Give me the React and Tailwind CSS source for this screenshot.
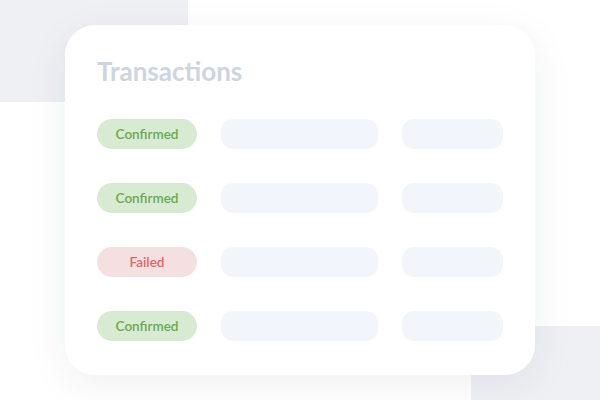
import React from 'react';

const rows = [
    { status: 'Confirmed', ok: true },
    { status: 'Confirmed', ok: true },
    { status: 'Failed', ok: false },
    { status: 'Confirmed', ok: true },
];

const Pill = ({ status, ok }) => (
    <div className={`w-[100px] h-[30px] rounded-full flex items-center justify-center text-[13.5px] font-semibold ${ok ? 'bg-[#d9ead3] text-[#6aa84f]' : 'bg-[#f4e0e0] text-[#e06666]'}`}>
        {status}
    </div>
);

export default function App() {
    return (
        <div className="relative w-[600px] h-[400px] overflow-hidden bg-white" style={{ fontFamily: 'Lato, "Open Sans", sans-serif' }}>
            {/* backdrop blocks */}
            <div className="absolute left-0 top-0 w-[188px] h-[102px] bg-[#eef0f4]" />
            <div className="absolute left-[471px] top-[326px] w-[129px] h-[74px] bg-[#eef0f4]" />

            <div className="absolute left-[65px] top-[25px] w-[470px] h-[350px] rounded-[30px] bg-white shadow-[0_10px_40px_rgba(30,41,59,0.07)] pl-[32px] pt-[30px]">
                <h2 className="text-[26px] leading-[32px] font-bold text-[#cdd5df]">Transactions</h2>
                <div className="mt-[32px] flex flex-col gap-[34px]">
                    {rows.map((row, i) => (
                        <div key={i} className="flex items-center">
                            <Pill {...row} />
                            <div className="ml-[24px] w-[157px] h-[30px] rounded-[12px] bg-[#f2f5f9]" />
                            <div className="ml-[24px] w-[101px] h-[30px] rounded-[12px] bg-[#f2f5f9]" />
                        </div>
                    ))}
                </div>
            </div>
        </div>
    );
}
